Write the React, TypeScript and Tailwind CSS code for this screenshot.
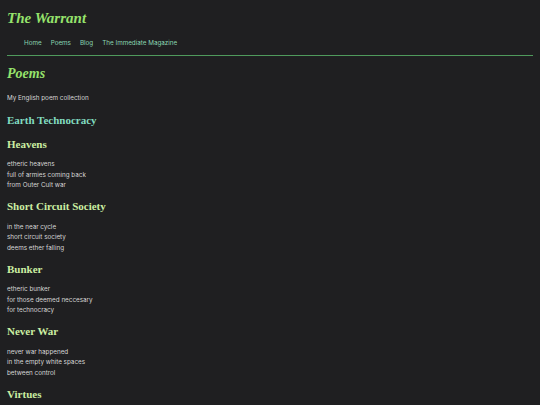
import React from 'react';

const poems = [
  { title: 'Heavens', lines: ['etheric heavens', 'full of armies coming back', 'from Outer Cult war'] },
  { title: 'Short Circuit Society', lines: ['in the near cycle', 'short circuit society', 'deems ether falling'] },
  { title: 'Bunker', lines: ['etheric bunker', 'for those deemed neccesary', 'for technocracy'] },
  { title: 'Never War', lines: ['never war happened', 'in the empty white spaces', 'between control'] },
  { title: 'Virtues', lines: [] as string[] },
];

const navLinks = ['Home', 'Poems', 'Blog', 'The Immediate Magazine'];

export default function App() {
  return (
    <div className="h-[405px] overflow-hidden bg-[#1f1f21] px-[7px] font-['Inter',sans-serif] text-[#d6d6d6]">
      <div className="pt-[8px] text-[15px] leading-[20px] font-bold italic text-[#96e36c] font-['Liberation_Serif',serif]">
        The Warrant
      </div>
      <nav className="mt-[9px] pl-[17px] flex gap-[9px] text-[6.3px] leading-[12px] text-[#8ad6b2]">
        {navLinks.map((link) => (
          <a key={link} href="#">{link}</a>
        ))}
      </nav>
      <div className="mt-[6px] border-t border-[#4f9a5c]" />

      <h1 className="mt-[9px] text-[14px] leading-[18px] font-bold italic text-[#96e36c] font-['Liberation_Serif',serif]">
        Poems
      </h1>
      <p className="mt-[10px] text-[6.3px] leading-[10px]">My English poem collection</p>

      <h2 className="mt-[9px] text-[11px] leading-[16px] font-bold text-[#82dcc0] font-['Liberation_Serif',serif]">
        Earth Technocracy
      </h2>

      {poems.map((poem, i) => (
        <div key={poem.title} className={i === 0 ? 'mt-[7.5px]' : ''}>
          <h3 className="text-[11px] leading-[16px] font-bold text-[#cbeea2] font-['Liberation_Serif',serif]">
            {poem.title}
          </h3>
          {poem.lines.length > 0 && (
            <div className="mt-[7.5px] mb-[7.5px] text-[6.3px] leading-[10.5px]">
              {poem.lines.map((line) => (
                <div key={line}>{line}</div>
              ))}
            </div>
          )}
        </div>
      ))}
    </div>
  );
}
